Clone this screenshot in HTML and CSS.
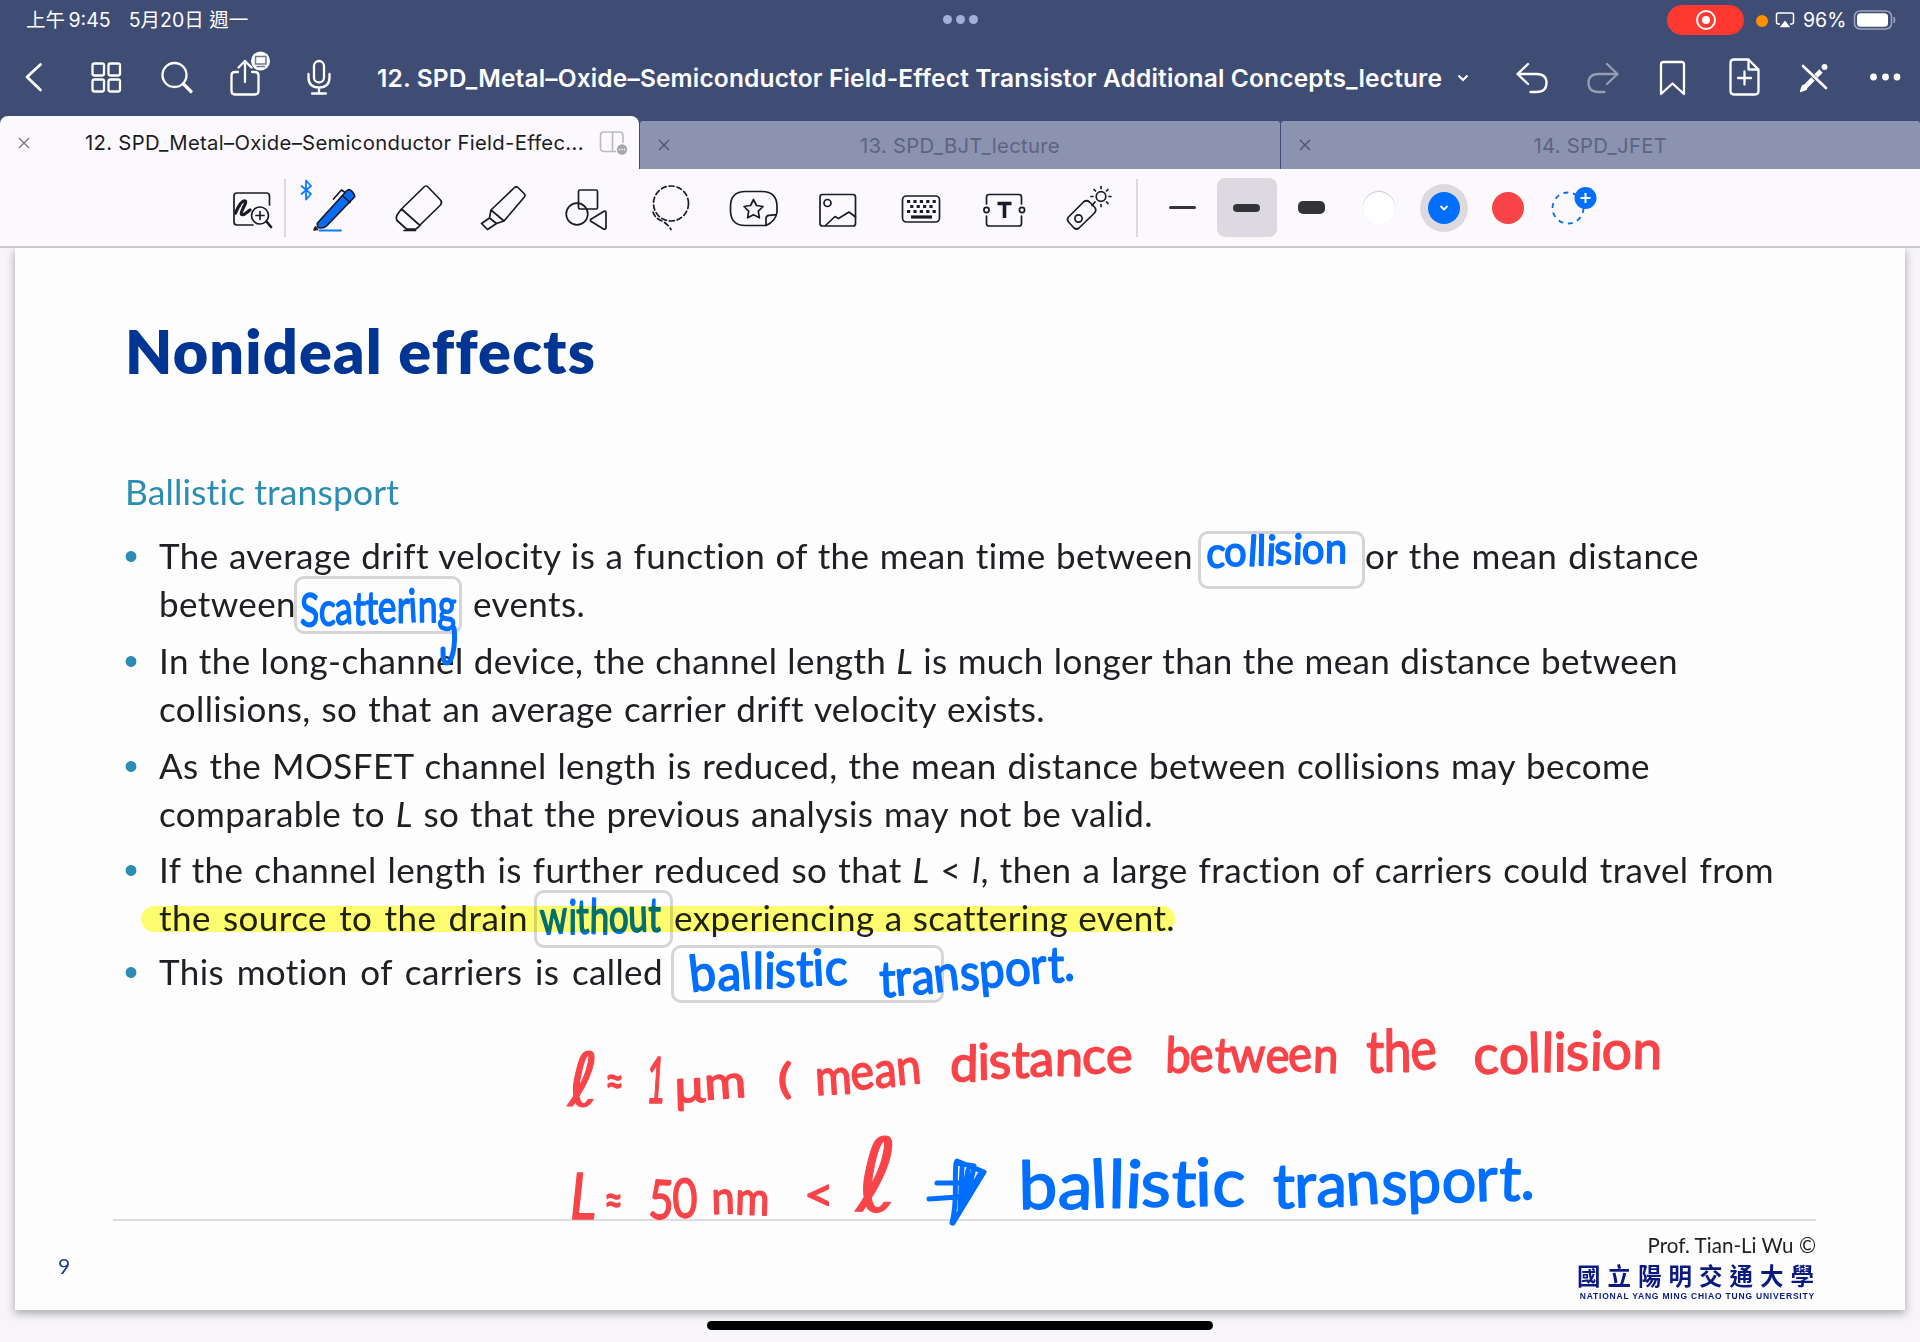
FILE: index.html
```html
<!DOCTYPE html>
<html lang="zh-Hant">
<head>
<meta charset="utf-8">
<title>12. SPD_Metal–Oxide–Semiconductor Field-Effect Transistor Additional Concepts_lecture</title>
<link rel="stylesheet" href="styles.css">
</head>
<body>
<header class="header">
  <div class="status">
    <div class="status-time"><span class="clock">上午 9:45</span><span class="date">5月20日 週一</span></div>
    <div class="multitask"><i></i><i></i><i></i></div>
    <div class="status-right">
      <span class="rec"><svg width="24" height="24" viewBox="0 0 24 24" fill="none" stroke="#fff" stroke-width="2"><circle cx="12" cy="12" r="9"/><circle cx="12" cy="12" r="4" fill="#fff" stroke="none"/></svg></span>
      <span class="mic-dot"></span>
      <svg class="airplay" width="20" height="18" viewBox="0 0 20 18"><path d="M5 13H3.2Q1.5 13 1.5 11.300V3.700Q1.500 2 3.200 2h13.600q1.700 0 1.700 1.700v7.600q0 1.700-1.700 1.700H15" fill="none" stroke="#fff" stroke-width="1.500"/><path d="M10 9.500l5.200 6.700H4.800z" fill="#fff"/></svg>
      <span class="pct">96%</span>
      <svg class="battery" width="44" height="22" viewBox="0 0 44 22"><rect x="1.500" y="2" width="37" height="18" rx="5.500" fill="none" stroke="#9fa6bd" stroke-width="1.500"/><rect x="4" y="4.300" width="31" height="13.400" rx="3.500" fill="#fff"/><path d="M41 8q2 3 0 6z" fill="#9fa6bd" stroke="#9fa6bd"/></svg>
    </div>
  </div>
  <nav class="nav">
    <div class="nav-left">
      <button><svg viewBox="0 0 60 60"><path d="M35.500 17.500L22 30L35.500 43" stroke-width="2.800"/></svg></button>
      <button><svg viewBox="0 0 60 60"><rect x="17.500" y="16.500" width="11.500" height="12" rx="2"/><rect x="33.500" y="16.500" width="11.500" height="12" rx="2"/><rect x="17.500" y="32.500" width="11.500" height="12" rx="2"/><rect x="33.500" y="32.500" width="11.500" height="12" rx="2"/></svg></button>
      <button><svg viewBox="0 0 60 60"><circle cx="28.500" cy="28" r="12"/><path d="M37.500 37L45 44.500" stroke-width="3.200"/></svg></button>
      <button><svg viewBox="0 0 60 60"><path d="M21 25h-3q-3.500 0-3.500 3.500v15.500q0 3.500 3.500 3.500h20q3.500 0 3.500-3.500V28.500q0-3.500-3.500-3.500h-3M28 35V14M21.500 20.500L28 14l6.500 6.500"/><circle cx="43.500" cy="14" r="9.500" fill="#fff" stroke="none"/><path d="M38.500 9.500h10.500v7.500h-10.500zM40 19.500h7.500" stroke="#6f7897" stroke-width="1.500"/></svg></button>
      <button><svg viewBox="0 0 60 60"><rect x="26" y="14" width="10" height="21.500" rx="5"/><path d="M20.500 27v3.500q0 10 10.500 10t10.500-10V27M31 40.500V46M24 46.500h14"/></svg></button>
    </div>
    <div class="nav-title"><h1>12. SPD_Metal–Oxide–Semiconductor Field-Effect Transistor Additional Concepts_lecture</h1><svg width="14" height="10" viewBox="0 0 14 10"><path d="M2.500 2.500L7 7l4.500-4.500"/></svg></div>
    <div class="nav-right">
      <button><svg viewBox="0 0 60 60"><path d="M26 17L15.500 27L26 37M15.500 27H34.500q10 0 10 9t-10 9h-6"/></svg></button>
      <button class="dim"><svg viewBox="0 0 60 60"><path d="M34 17L44.500 27L34 37M44.500 27H25.500q-10 0-10 9t10 9h6"/></svg></button>
      <button><svg viewBox="0 0 60 60"><path d="M18 17.500q0-2.500 2.500-2.500h18q2.500 0 2.500 2.500V47L29.500 36.500L18 47z"/></svg></button>
      <button><svg viewBox="0 0 60 60"><path d="M34.500 12.500H20q-3.500 0-3.500 3.500v28q0 3.500 3.500 3.500h21q3.500 0 3.500-3.500V22.500zM34.500 12.500v10h10M30.500 24.500v13M24 31h13"/></svg></button>
      <button><svg viewBox="0 0 60 60"><path d="M19 19L42 41" stroke-width="2.600"/><path d="M20 41L29 32M32 29L37 24" stroke-width="4.600" stroke-linecap="butt"/><path d="M17 44l2-5 3 3z" fill="currentColor"/><circle cx="40.500" cy="20" r="1.800" fill="currentColor"/></svg></button>
      <button><svg viewBox="0 0 60 60"><g fill="currentColor" stroke="none"><circle cx="18.500" cy="30" r="3.400"/><circle cx="30.500" cy="30" r="3.400"/><circle cx="42" cy="30" r="3.400"/></g></svg></button>
    </div>
  </nav>
  <div class="tabs">
    <div class="tab active"><span class="close"><svg width="12" height="12" viewBox="0 0 12 12"><path d="M1 1l10 10M11 1L1 11"/></svg></span><span class="tab-name">12. SPD_Metal–Oxide–Semiconductor Field-Effec...</span><svg class="split" width="30" height="26" viewBox="0 0 30 26"><path d="M17 21.500H5q-3.500 0-3.500-3.500V5.500Q1.500 2 5 2h15.500q3.500 0 3.500 3.500V13M13.500 2v19.500" fill="none" stroke="#bcbac0" stroke-width="1.600"/><circle cx="23" cy="19.500" r="5.200" fill="#a9a7ae"/><g fill="#fff"><circle cx="20.500" cy="19.500" r=".8"/><circle cx="23" cy="19.500" r=".8"/><circle cx="25.500" cy="19.500" r=".8"/></g></svg></div>
    <div class="tab"><span class="close"><svg width="12" height="12" viewBox="0 0 12 12"><path d="M1 1l10 10M11 1L1 11"/></svg></span><span class="tab-name">13. SPD_BJT_lecture</span></div>
    <div class="tab"><span class="close"><svg width="12" height="12" viewBox="0 0 12 12"><path d="M1 1l10 10M11 1L1 11"/></svg></span><span class="tab-name">14. SPD_JFET</span></div>
  </div>
</header>

<div class="toolbar">
  <div class="tools">
    <button><svg viewBox="0 0 60 60"><path d="M47.500 27V18q0-3-3-3H15q-3 0-3 3v26q0 3 3 3h16"/><path d="M13.500 35C17 27 20 22 23 23C26 24 17 35 19.500 36.500C22 38 25 34 28 32" stroke-width="3.200"/><circle cx="38" cy="37.500" r="8.500"/><path d="M44.500 43.500L49 49" stroke-width="2.600"/><path d="M34 37.500h8M38 33.500v8"/></svg></button>
    <button class="pen"><svg viewBox="0 0 60 60"><g stroke="#0a7cff" stroke-width="1.800"><path d="M-4.500 8L5 16L0 21.500V2.500L5 8L-4.500 16"/><path d="M13.500 52.500H35"/></g><path d="M40.500 13q3-3 6 1t2 5L20.500 48q-2 2-6 2t-3-5z" fill="#0a6cf5"/><path d="M37 18l7 6.500M27.500 21l8-9 3 2"/><path d="M8 52l1.500-3 2 2.500z" fill="#1b1b1f"/></svg></button>
    <button><svg viewBox="0 0 60 60"><path d="M34.500 9.500q2.500-3 5 0L51.500 22q2 2 0 5L32 46Q30 49 27 51H17.500L8 42.500Q6.500 40 8 37L12.500 31L31 47.500M12.500 31L34.500 9.500M15 52.500h11.500"/></svg></button>
    <button><svg viewBox="0 0 60 60"><path d="M41.500 9.500q2-1.500 4 .5l5.500 5.500q2 2 0 4L31 43L18 32zM18 32l-1.500 8L23.500 45.500L31 43M16.500 40L8.500 45.500L14.500 51.500L23.500 45.500"/></svg></button>
    <button><svg viewBox="0 0 60 60"><rect x="21.500" y="12" width="19" height="19" rx="1.500"/><circle cx="20" cy="36" r="10.800"/><path d="M33.500 41.500L47.500 33q1.500 0 1.500 1.500v15.500q-1 2-2.500 1L33.500 43z"/></svg></button>
    <button><svg viewBox="0 0 60 60"><g stroke-dasharray="5 3"><circle cx="31" cy="25.500" r="17.500"/><path d="M13 34q2 6 8 8.500t10 9"/></g></svg></button>
    <button><svg viewBox="0 0 60 60"><path d="M21.500 13.500h16q15.500 0 15.500 15V34q-1 9-11 13.500H21.500Q6.500 47.500 6.500 32.500v-4q0-15 15-15zM42 47.500V40.500q0-3 3-3.200l7-.6"/><path d="M29.500 21.500l3 6 6.500 1-4.700 4.700 1.100 6.600-5.900-3.100-5.900 3.100 1.100-6.600L20 28.500l6.500-1z"/></svg></button>
    <button><svg viewBox="0 0 60 60"><rect x="12" y="16.500" width="35.500" height="31.500" rx="2.500"/><circle cx="19.500" cy="25" r="3.500"/><path d="M17.500 47.500L27 38.500l3.500 2L41 34l6.500 5"/></svg></button>
    <button><svg viewBox="0 0 60 60"><rect x="11.500" y="18" width="37" height="26" rx="4"/><g stroke-linecap="butt"><path d="M16 23.500h29M16 33.500h29" stroke-width="3" stroke-dasharray="3.200 3.200"/><path d="M19.200 28.500h23" stroke-width="3" stroke-dasharray="3.200 3.200"/><path d="M20 39h21" stroke-width="3.200"/></g></svg></button>
    <button><svg viewBox="0 0 60 60"><path d="M11.500 26v-7q0-2.500 2.500-2.500h30q2.500 0 2.500 2.500v7M11.500 38v7.500q0 2.500 2.500 2.500h30q2.500 0 2.500-2.500V38"/><circle cx="11.500" cy="32" r="2.600"/><circle cx="47" cy="32" r="2.600"/><path d="M22.500 25.500h14M29.500 25.500V40" stroke-width="3.600" stroke-linecap="butt"/></svg></button>
    <button><svg viewBox="0 0 60 60"><path d="M24.500 24q3-2.500 6 0l5 5q2.500 3 0 6L20 50q-2.500 2-5 0L9.500 44q-2-2.500 0-5zM33 27.500l3-3.500"/><circle cx="19.500" cy="40.500" r="3.600"/><circle cx="42" cy="18.500" r="4.800"/><path d="M42 8.500v2M42 26.500v2M32 18.500h2M50 18.500h2M35 11.500l1.500 1.500M47.500 24l1.500 1.500M49 11.500L47.500 13" /></svg></button>
  </div>
  <div class="weights">
    <span class="weight"><i class="thin"></i></span>
    <span class="weight on"><i class="mid"></i></span>
    <span class="weight"><i class="thick"></i></span>
  </div>
  <div class="colors">
    <span class="dot white"></span>
    <span class="dot blue"><svg width="12" height="10" viewBox="0 0 12 10"><path d="M2.500 3L6 6.500L9.500 3" fill="none" stroke="#fff" stroke-width="1.800"/></svg></span>
    <span class="dot red"></span>
    <svg class="add" width="56" height="56" viewBox="0 0 56 56" fill="none"><circle cx="24" cy="28" r="15.500" stroke="#0a6ce8" stroke-width="1.800" stroke-dasharray="5 4.700"/><circle cx="41.500" cy="18" r="11" fill="#006fff"/><path d="M36.500 18h10M41.500 13v10" stroke="#fff" stroke-width="2"/></svg>
  </div>
</div>

<main class="slide">
  <h2 class="slide-title">Nonideal effects</h2>
  <h3 class="slide-sub">Ballistic transport</h3>
  <ul class="points">
    <li>
      <p><span class="w1">The average drift velocity is a function of the mean time between</span><span class="blank b1"></span><span class="w1b">or the mean distance</span></p>
      <p><span class="w2">between</span><span class="blank b2"></span><span class="w2b">events.</span></p>
    </li>
    <li>
      <p><span class="w3">In the long-channel device, the channel length <em>L</em> is much longer than the mean distance between</span></p>
      <p><span class="w4">collisions, so that an average carrier drift velocity exists.</span></p>
    </li>
    <li>
      <p><span class="w5">As the MOSFET channel length is reduced, the mean distance between collisions may become</span></p>
      <p><span class="w6">comparable to <em>L</em> so that the previous analysis may not be valid.</span></p>
    </li>
    <li>
      <p><span class="w7">If the channel length is further reduced so that <em>L</em> &lt; <em>l</em>, then a large fraction of carriers could travel from</span></p>
      <p><span class="w8">the source to the drain</span><span class="blank b3"></span><span class="w8b">experiencing a scattering event.</span></p>
    </li>
    <li>
      <p><span class="w9">This motion of carriers is called</span><span class="blank b4"></span></p>
    </li>
  </ul>
  <footer class="slide-foot">
    <span class="page-no">9</span>
    <div class="credit">
      <div class="prof">Prof. Tian-Li Wu ©</div>
      <div class="uni-zh">國立陽明交通大學</div>
      <div class="uni-en">NATIONAL YANG MING CHIAO TUNG UNIVERSITY</div>
    </div>
  </footer>

  <svg class="ink" viewBox="15 248 1890 1062">
    <g class="blue-ink">
      <text x="1206" y="567" textLength="141" lengthAdjust="spacingAndGlyphs" font-size="42" transform="rotate(-2 1206 567)" rotate="4 0 6 3 5 -3 4 0 3">collision</text>
      <text x="300" y="626" textLength="156" lengthAdjust="spacingAndGlyphs" font-size="46" transform="rotate(-2 300 626)" rotate="3 2 -2 4 2 0 3 -2 2 5">Scattering</text>
      <text x="541" y="935" textLength="120" lengthAdjust="spacingAndGlyphs" font-size="48" transform="rotate(-2 541 935)" rotate="-2 3 0 4 2 0 3">without</text>
      <text x="691" y="992" textLength="157" lengthAdjust="spacingAndGlyphs" font-size="50" transform="rotate(-3 691 992)" rotate="-4 2 -2 3 4 0 3 0 2">ballistic</text>
      <text x="880" y="997" textLength="196" lengthAdjust="spacingAndGlyphs" font-size="50" transform="rotate(-5 880 997)" rotate="3 0 2 -2 3 0 2 0 4 0">transport.</text>
      <text x="1019" y="1209" textLength="226" lengthAdjust="spacingAndGlyphs" font-size="66" transform="rotate(-1 1019 1209)" rotate="0 3 -2 2 4 0 3 0 2">ballistic</text>
      <text x="1273" y="1208" textLength="262" lengthAdjust="spacingAndGlyphs" font-size="62" transform="rotate(-2 1273 1208)" rotate="2 0 2 -2 3 0 2 0 4 0">transport.</text>
    </g>
    <path class="arrow" d="M937 1183L962 1183M929 1199L958 1197M952 1223C958 1200 954 1180 956 1163L974 1166M957 1161L984 1172L953 1223M968 1170L962 1205M974 1168L966 1200M962 1168L960 1210M980 1174L960 1208"/>
    <path class="arrow" d="M454 628C456 645 452 663 447 663C443 663 443 656 443 649"/>
    <g class="red-ink">
      <text class="script" x="568" y="1106" font-size="74">ℓ</text>
      <text x="605" y="1097" textLength="19" lengthAdjust="spacingAndGlyphs" font-size="44">≈</text>
      <text x="646" y="1103" font-size="64" font-style="italic" textLength="20" lengthAdjust="spacingAndGlyphs">1</text>
      <text x="675" y="1103" textLength="72" lengthAdjust="spacingAndGlyphs" font-size="46" transform="rotate(-6 675 1103)" rotate="4 2">μm</text>
      <text x="778" y="1093" textLength="14" lengthAdjust="spacingAndGlyphs" font-size="40">(</text>
      <text x="816" y="1095" textLength="107" lengthAdjust="spacingAndGlyphs" font-size="50" transform="rotate(-7 816 1095)" rotate="4 0 3 2">mean</text>
      <text x="950" y="1081" textLength="183" lengthAdjust="spacingAndGlyphs" font-size="50" transform="rotate(-3 950 1081)" rotate="4 2 -2 3 0 4 0 2">distance</text>
      <text x="1165" y="1072" textLength="173" lengthAdjust="spacingAndGlyphs" font-size="49" rotate="2 -3 3 0 2 -4 2">between</text>
      <text x="1366" y="1072" textLength="72" lengthAdjust="spacingAndGlyphs" font-size="58" transform="rotate(-2 1366 1072)" rotate="3 2 -3">the</text>
      <text x="1474" y="1074" textLength="188" lengthAdjust="spacingAndGlyphs" font-size="54" transform="rotate(-2 1474 1074)" rotate="0 3 0 3 2 0 4 0 3">collision</text>
      <text x="570" y="1219" textLength="26" lengthAdjust="spacingAndGlyphs" font-size="64" font-style="italic">L</text>
      <text x="604" y="1216" textLength="19" lengthAdjust="spacingAndGlyphs" font-size="44">≈</text>
      <text x="648" y="1218" textLength="50" lengthAdjust="spacingAndGlyphs" font-size="54" rotate="3 -2">50</text>
      <text x="712" y="1214" textLength="57" lengthAdjust="spacingAndGlyphs" font-size="46" rotate="-2 2">nm</text>
      <text x="804" y="1211" textLength="30" lengthAdjust="spacingAndGlyphs" font-size="46">&lt;</text>
      <text class="script" x="856" y="1211" font-size="101">ℓ</text>
    </g>
  </svg>
  <div class="highlight"></div>
</main>
<div class="home-bar"></div>
</body>
</html>
```
FILE: styles.css
```css
* { box-sizing: border-box; }
body {
  margin: 0;
  width: 1920px;
  height: 1342px;
  overflow: hidden;
  background: #f7f5f9;
  font-family: Inter, "Noto Sans CJK TC", sans-serif;
  color: #1b1b1f;
}
button { padding: 0; border: 0; background: none; color: inherit; font: inherit; display: flex; align-items: center; justify-content: center; }
i { display: block; }

.header { background: #3f4c73; color: #fff; height: 169px; display: flex; flex-direction: column; }

/* status bar */
.status { height: 40px; display: flex; justify-content: space-between; align-items: center; position: relative; }
.status-time { display: flex; gap: 18px; padding-left: 26px; font-size: 19.5px; line-height: 38px; width: 800px; }
.clock { word-spacing: -2px; }
.multitask { display: flex; gap: 4px; margin-bottom: 2px; }
.multitask i { width: 9px; height: 9px; border-radius: 50%; background: #a3aedb; }
.status-right { width: 800px; display: flex; justify-content: flex-end; align-items: center; padding-right: 23px; height: 38px; }
.rec { width: 77px; height: 30px; border-radius: 15px; background: #ff3830; display: flex; align-items: center; justify-content: center; margin-right: 12px; }
.mic-dot { width: 12px; height: 12px; border-radius: 50%; background: #ff9100; margin: 2px 7px 0 0; }
.airplay { margin-right: 8px; }
.pct { font-size: 19.500px; width: 43px; margin-right: 7px; white-space: nowrap; }

/* navigation */
.nav { height: 75px; display: flex; align-items: flex-start; }
.nav button { height: 74px; }
.nav button svg { width: 60px; height: 60px; flex: none; fill: none; stroke: currentColor; stroke-width: 2.300; stroke-linecap: round; stroke-linejoin: round; }
.nav-left { display: flex; width: 377px; }
.nav-left button { width: 71px; }
.nav-left button:first-child { width: 69px; }
.nav-title { flex: 1; display: flex; align-items: center; height: 76px; }
.nav-title h1 { margin: 0; font-size: 24.500px; font-weight: 600; letter-spacing: .16px; white-space: nowrap; width: 1079px; }
.nav-title svg { fill: none; stroke: #fff; stroke-width: 2; }
.nav-right { display: flex; width: 423px; }
.nav-right button { width: 70.500px; }
.dim { opacity: .45; }

/* document tabs */
.tabs { display: flex; align-items: flex-end; height: 54px; gap: 1px; }
.tab { width: 639.300px; height: 48px; border-radius: 3px 3px 0 0; background: #8b93b1; color: #5d6480; display: flex; align-items: center; font-size: 20.300px; letter-spacing: .3px; }
.tab.active { height: 53px; background: #fbf9fd; color: #1b1b1f; border-radius: 8px 8px 0 0; }
.close { width: 48px; display: flex; justify-content: center; }
.close svg { fill: none; stroke: #50546a; stroke-width: 1.400; }
.active .close svg { stroke: #77757c; }
.tab-name { flex: 1; text-align: center; padding-right: 48px; white-space: nowrap; }
.active .tab-name { padding: 0 0 0 37px; text-align: left; }
.split { margin-right: 10px; }

/* tool strip */
.toolbar { height: 79px; background: #fbf9fd; border-bottom: 2px solid #cac8cd; display: flex; align-items: center; padding-left: 210px; }
.tools { display: flex; width: 928px; height: 58px; border-right: 2px solid #dbd9de; }
.tools button { width: 83.700px; flex: none; }
.tools button:first-child { background: linear-gradient(#dbd9de, #dbd9de) 74px 0 / 2px 58px no-repeat; }
.tools svg { width: 60px; height: 60px; flex: none; overflow: visible; fill: none; stroke: #1b1b26; stroke-width: 1.700; stroke-linecap: round; stroke-linejoin: round; }
.weights { display: flex; padding-left: 14px; gap: 4.500px; }
.weight { width: 60px; height: 59px; border-radius: 8px; display: flex; align-items: center; justify-content: center; }
.weight.on { background: #dcdae0; }
.weight i { background: #343438; border-radius: 5px; width: 27px; }
.weight .thin { height: 3px; }
.weight .mid { height: 8px; }
.weight .thick { height: 13px; }
.colors { display: flex; align-items: center; padding-left: 22px; }
.dot { width: 32px; height: 32px; border-radius: 50%; display: flex; align-items: center; justify-content: center; margin-right: 32.500px; }
.dot.white { background: #fff; box-shadow: 0 -1px 1px #c9c7cc; }
.dot.blue { background: #006fff; box-shadow: 0 0 0 8px #dcdadf; }
.dot.red { background: #f84448; margin-right: 20px; }

/* slide */
.slide { position: relative; margin: 0 15px; height: 1062px; background: #fefdfe; box-shadow: 0 3px 9px rgba(0, 0, 0, .35); padding: 68px 89px 0 110px; font-family: Lato, sans-serif; font-variant-ligatures: none; clip-path: inset(0 -15px -20px -15px); }
.slide-title { margin: 0; font-size: 61px; line-height: 70px; font-weight: 800; letter-spacing: 1.200px; color: #003594; white-space: nowrap; }
.slide-sub { margin: 82px 0 15px; font-size: 35.500px; line-height: 48px; font-weight: 400; letter-spacing: .1px; color: #2b8cb4; }
.points { list-style: none; margin: 0; padding: 0; color: #202024; font-size: 35px; letter-spacing: .4px; }
.points li { padding-left: 34px; margin-bottom: 9px; background: radial-gradient(circle at 6px 25.500px, #2b8cb4 5px, transparent 5.800px) no-repeat; }
.points li:nth-child(3) { margin-bottom: 8px; }
.points li:nth-child(4) { margin-bottom: 6px; }
.points p { margin: 0; height: 48px; line-height: 48px; display: flex; align-items: flex-start; }
.points p > span { flex: none; white-space: nowrap; text-align: justify; text-align-last: justify; }
.w1 { width: 1034px; } .w1b { width: 334px; }
.w2 { width: 135px; } .w2b { width: 110px; margin-left: 11px; }
.w3 { width: 1519px; } .w4 { width: 886px; }
.w5 { width: 1491px; } .w6 { width: 994px; }
.w7 { width: 1615px; }
.w8 { width: 369px; } .w8b { width: 501px; }
.w9 { width: 504px; }
.blank { height: 58px; border: 3px solid #d7d4d8; border-radius: 10px; }
.b1 { width: 167px; margin-left: 5px; }
.b2 { width: 168px; margin-top: -3px; }
.b3 { width: 139px; margin: -3px 1px 0 6px; }
.b4 { width: 273px; margin: -2px 0 0 8px; }

.slide-foot { border-top: 2px solid #dedce0; width: 1703px; margin: 224px 0 0 -12px; display: flex; justify-content: space-between; }
.page-no { font-size: 21px; color: #1c3f94; margin: 32px 0 0 -55px; }
.credit { text-align: right; white-space: nowrap; padding-top: 10px; }
.prof { font-size: 20.500px; line-height: 28px; color: #202024; letter-spacing: .05px; }
.uni-zh { font-family: "Noto Sans CJK TC", sans-serif; font-weight: 700; font-size: 23.500px; line-height: 30px; letter-spacing: 7px; margin-right: -5px; color: #0a1a80; margin-top: 1px; }
.uni-en { font-family: "Liberation Sans", sans-serif; font-weight: 700; font-size: 8.500px; line-height: 12px; letter-spacing: .8px; margin-right: 1px; color: #0a1a80; }

/* pen layer drawn over the slide */
.ink { position: absolute; inset: 0; width: 1890px; height: 1062px; }
.ink text { font-family: Lato, sans-serif; stroke-width: 1.600; stroke-linejoin: round; }
.ink .script { font-family: "DejaVu Sans", sans-serif; stroke-width: 1; }
.blue-ink { fill: #006fff; stroke: #006fff; }
.red-ink { fill: #f84448; stroke: #f84448; }
.arrow { fill: none; stroke: #006fff; stroke-width: 5; stroke-linecap: round; stroke-linejoin: round; }
.highlight { position: absolute; left: 126px; top: 658px; width: 1034px; height: 26px; border-radius: 13px; background: #ffff70; mix-blend-mode: multiply; }

.home-bar { width: 506px; height: 9px; border-radius: 5px; background: #000; margin: 11px auto 0; }
```
